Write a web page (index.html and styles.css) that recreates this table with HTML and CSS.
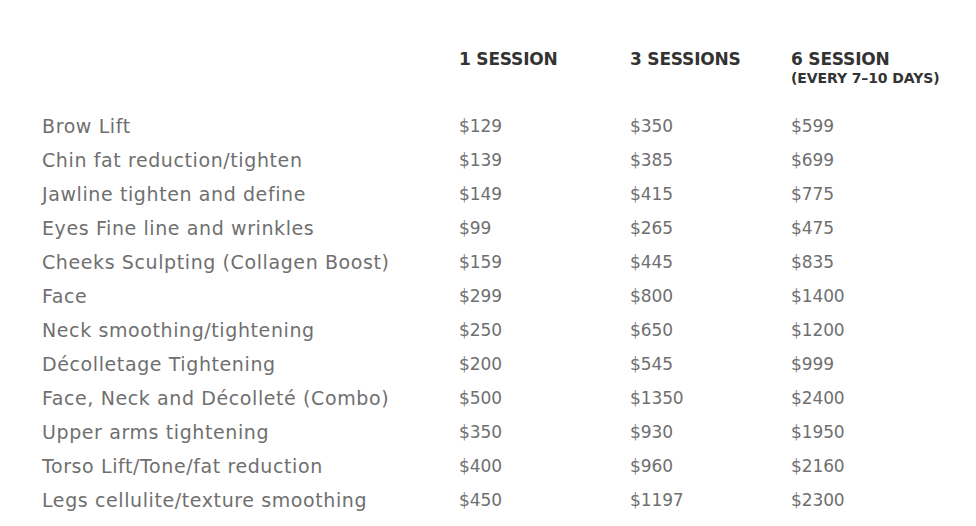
FILE: index.html
```html
<!DOCTYPE html>
<html lang="en">
<head>
<meta charset="utf-8">
<title>Pricing</title>
<link rel="stylesheet" href="styles.css">
</head>
<body>
<div class="prices">
  <div class="head"></div>
  <div class="head">1 SESSION</div>
  <div class="head">3 SESSIONS</div>
  <div class="head">6 SESSION<span class="sub">(EVERY 7–10 DAYS)</span></div>

  <div class="name">Brow Lift</div><div>$129</div><div>$350</div><div>$599</div>
  <div class="name">Chin fat reduction/tighten</div><div>$139</div><div>$385</div><div>$699</div>
  <div class="name">Jawline tighten and define</div><div>$149</div><div>$415</div><div>$775</div>
  <div class="name">Eyes Fine line and wrinkles</div><div>$99</div><div>$265</div><div>$475</div>
  <div class="name">Cheeks Sculpting (Collagen Boost)</div><div>$159</div><div>$445</div><div>$835</div>
  <div class="name">Face</div><div>$299</div><div>$800</div><div>$1400</div>
  <div class="name">Neck smoothing/tightening</div><div>$250</div><div>$650</div><div>$1200</div>
  <div class="name">Décolletage Tightening</div><div>$200</div><div>$545</div><div>$999</div>
  <div class="name">Face, Neck and Décolleté (Combo)</div><div>$500</div><div>$1350</div><div>$2400</div>
  <div class="name">Upper arms tightening</div><div>$350</div><div>$930</div><div>$1950</div>
  <div class="name">Torso Lift/Tone/fat reduction</div><div>$400</div><div>$960</div><div>$2160</div>
  <div class="name">Legs cellulite/texture smoothing</div><div>$450</div><div>$1197</div><div>$2300</div>
</div>
</body>
</html>
```
FILE: styles.css
```css
html, body {
  margin: 0;
  padding: 0;
  background: #ffffff;
}
body {
  font-family: "DejaVu Sans", "Noto Sans", sans-serif;
}
.prices {
  display: grid;
  grid-template-columns: 417px 171px 161px 1fr;
  grid-template-rows: 61px;
  grid-auto-rows: 34px;
  padding: 48px 0 0 42px;
  color: #6f6f6f;
  font-size: 17px;
}
.prices > div {
  display: flex;
  align-items: center;
  white-space: nowrap;
  letter-spacing: -0.1px;
}
.prices > .name {
  font-size: 19px;
  letter-spacing: 0.6px;
}
.prices > .head {
  display: block;
  height: 61px;
  font-weight: bold;
  color: #333333;
  font-size: 17px;
  line-height: 22px;
  letter-spacing: -0.2px;
}
.sub {
  display: block;
  font-size: 14px;
  line-height: 16px;
  letter-spacing: -0.1px;
}
```
